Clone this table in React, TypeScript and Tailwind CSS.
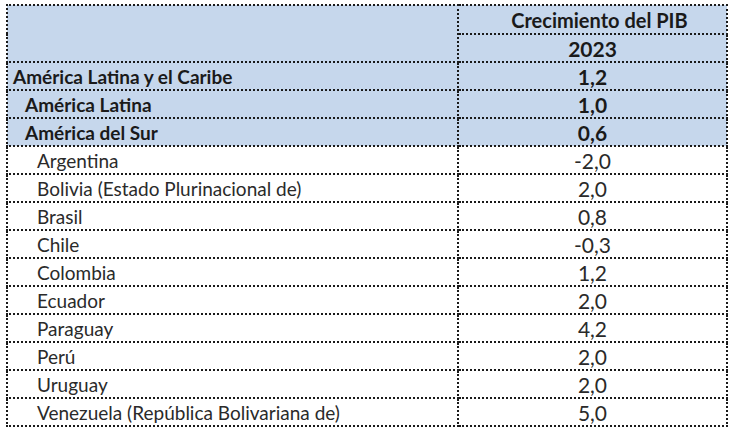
import React from 'react';

type Row = { name: string; value: string; level: 0 | 1 | 2 };

const rows: Row[] = [
  { name: 'América Latina y el Caribe', value: '1,2', level: 0 },
  { name: 'América Latina', value: '1,0', level: 1 },
  { name: 'América del Sur', value: '0,6', level: 1 },
  { name: 'Argentina', value: '-2,0', level: 2 },
  { name: 'Bolivia (Estado Plurinacional de)', value: '2,0', level: 2 },
  { name: 'Brasil', value: '0,8', level: 2 },
  { name: 'Chile', value: '-0,3', level: 2 },
  { name: 'Colombia', value: '1,2', level: 2 },
  { name: 'Ecuador', value: '2,0', level: 2 },
  { name: 'Paraguay', value: '4,2', level: 2 },
  { name: 'Perú', value: '2,0', level: 2 },
  { name: 'Uruguay', value: '2,0', level: 2 },
  { name: 'Venezuela (República Bolivariana de)', value: '5,0', level: 2 },
];

const cell = 'border-2 border-dotted border-[#1a1a1a] p-0 leading-none';

const App: React.FC = () => {
  return (
    <div className="w-[732px] h-[428px] bg-white pl-[6px] pt-[4px] font-['Lato','Liberation_Sans',sans-serif] text-[19px] text-[#1a1a1a]">
      <table className="border-collapse table-fixed w-[720px]">
        <colgroup>
          <col className="w-[451px]" />
          <col className="w-[269px]" />
        </colgroup>
        <tbody>
          <tr className="h-[29px] bg-[#c6d7ec]">
            <td rowSpan={2} className={cell}></td>
            <td className={`${cell} text-center font-bold text-[20px] pl-[14px]`}>Crecimiento del PIB</td>
          </tr>
          <tr className="h-[28px] bg-[#c6d7ec]">
            <td className={`${cell} text-center font-bold text-[21px]`}>2023</td>
          </tr>
          {rows.map((r) => {
            const bold = r.level < 2;
            const pad = r.level === 0 ? 'pl-[5px]' : r.level === 1 ? 'pl-[17px]' : 'pl-[29px]';
            return (
              <tr key={r.name} className={`h-[28px] ${bold ? 'bg-[#c6d7ec] font-bold' : 'bg-white text-[#2a2a2a]'}`}>
                <td className={`${cell} ${pad} whitespace-nowrap`}>{r.name}</td>
                <td className={`${cell} text-center text-[21px]`}>{r.value}</td>
              </tr>
            );
          })}
        </tbody>
      </table>
    </div>
  );
};

export default App;
